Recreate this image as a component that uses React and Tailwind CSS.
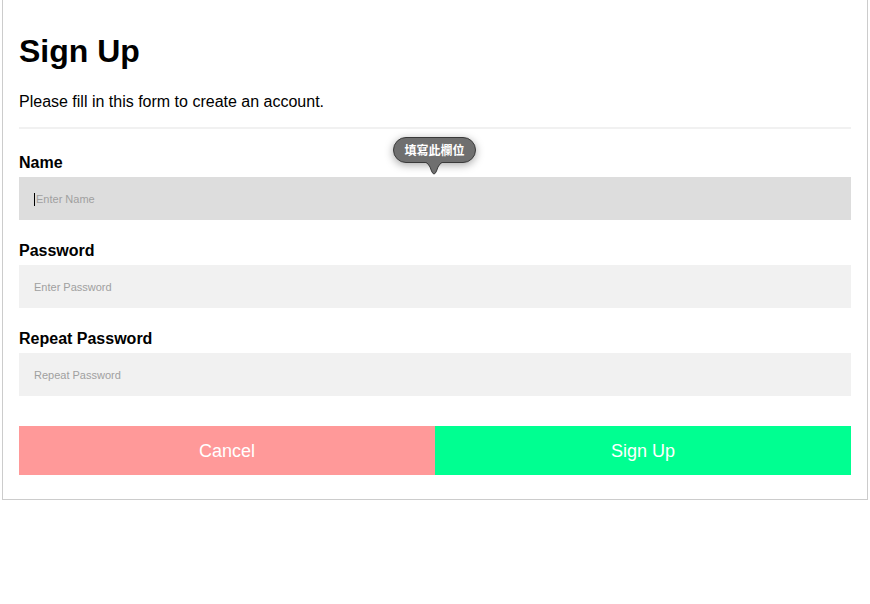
export default function App() {
  const font = { fontFamily: '"Liberation Sans", Arial, sans-serif' };
  return (
    <div className="w-[870px] h-[604px] bg-white relative" style={font}>
      <div className="ml-[2px] w-[866px] border-x border-b border-[#ccc] px-4 pt-[33px] pb-6">
        <h1 className="text-[32px] leading-[37px] font-bold text-black">Sign Up</h1>
        <p className="mt-[23px] text-[16px] leading-[18px] text-black">Please fill in this form to create an account.</p>
        <div className="mt-[16px] border-t-2 border-[#f1f1f1]"></div>
        <div className="mt-[25px] text-[16px] leading-[18px] font-bold text-black">Name</div>
        <div className="relative mt-[5px] h-[43px] bg-[#dddddd] flex items-center pl-[15px] pt-px">
          <span className="w-px h-[13px] bg-black mr-px"></span>
          <span className="text-[11px] text-[#a0a0a0]">Enter Name</span>
        </div>
        <div className="mt-[22px] text-[16px] leading-[18px] font-bold text-black">Password</div>
        <div className="mt-[5px] h-[43px] bg-[#f1f1f1] flex items-center pl-[15px] pt-px">
          <span className="text-[11px] text-[#a0a0a0]">Enter Password</span>
        </div>
        <div className="mt-[22px] text-[16px] leading-[18px] font-bold text-black">Repeat Password</div>
        <div className="mt-[5px] h-[43px] bg-[#f1f1f1] flex items-center pl-[15px] pt-px">
          <span className="text-[11px] text-[#a0a0a0]">Repeat Password</span>
        </div>
        <div className="mt-[30px] flex">
          <div className="flex-1 h-[49px] bg-[#ff9999] text-white text-[18px] flex items-center justify-center pt-[2px]">Cancel</div>
          <div className="flex-1 h-[49px] bg-[#00ff91] text-white text-[18px] flex items-center justify-center pt-[2px]">Sign Up</div>
        </div>
      </div>
      <div className="absolute left-[393px] top-[137px] w-[83px] h-[26px] rounded-[13px] bg-[#6f6f6f] border border-[#3a3a3a] shadow-[0_2px_8px_rgba(0,0,0,0.35)] flex items-center justify-center">
        <span className="text-white text-[12px] font-bold" style={{ fontFamily: '"Noto Sans CJK TC", "Noto Sans CJK SC", sans-serif' }}>填寫此欄位</span>
        <svg className="absolute left-[26px] top-[22px]" width="28" height="18" viewBox="0 0 28 18">
          <path d="M3 1.5 Q9 2 11.5 11 Q14 17 16.5 11 Q19 2 25 1.5" fill="#6f6f6f" stroke="#3a3a3a" strokeWidth="1" />
          <rect x="2" y="0" width="24" height="2" fill="#6f6f6f" />
        </svg>
      </div>
    </div>
  );
}
